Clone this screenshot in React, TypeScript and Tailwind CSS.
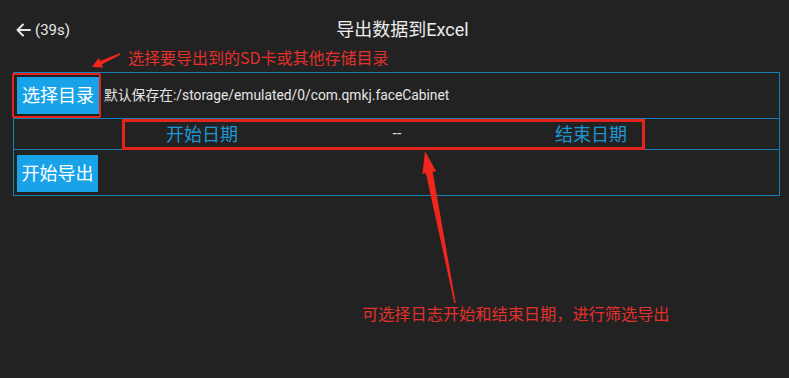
import React from "react";

const font = { fontFamily: '"Roboto", "Noto Sans CJK SC", sans-serif' } as const;

export default function App() {
  return (
    <div
      className="relative w-[789px] h-[378px] overflow-hidden bg-[#222222] text-[#e6e6e6]"
      style={font}
    >
      {/* header */}
      <div className="grid grid-cols-[1fr_auto_1fr] items-center h-[60px] pl-[16px]">
        <div className="flex items-center gap-[4px] text-[#e6e6e6]">
          <svg width="15" height="14" viewBox="0 0 15 14" fill="none" stroke="#e6e6e6" strokeWidth="2" strokeLinecap="round" strokeLinejoin="round">
            <path d="M14 7H2M7 1.5L1.5 7 7 12.5" />
          </svg>
          <span className="text-[15px] leading-none">(39s)</span>
        </div>
        <div className="text-[18px] leading-none text-[#ececec]">导出数据到Excel</div>
        <div />
      </div>

      {/* table */}
      <div className="mt-[12px] mx-[13px] w-[767px] border border-[#1b7fb6]">
        <div className="flex items-center h-[46px] pl-[3px] border-b border-[#1b7fb6]">
          <div className="flex items-center justify-center w-[82px] h-[37px] bg-[#18a3e8] text-white text-[18px]">
            选择目录
          </div>
          <span className="ml-[5px] text-[13.8px] text-[#e6e6e6]">
            默认保存在:/storage/emulated/0/com.qmkj.faceCabinet
          </span>
        </div>
        <div className="flex items-center h-[31px] border-b border-[#1b7fb6]">
          <span className="ml-[138px] w-[100px] text-center text-[18px] text-[#1b97d4]">开始日期</span>
          <span className="ml-[95px] w-[100px] text-center text-[16px] text-[#dcdcdc]">--</span>
          <span className="ml-[94px] w-[100px] text-center text-[18px] text-[#1b97d4]">结束日期</span>
        </div>
        <div className="flex items-start h-[45px] pl-[3px] pt-[5px]">
          <div className="flex items-center justify-center w-[81px] h-[37px] bg-[#18a3e8] text-white text-[18px]">
            开始导出
          </div>
        </div>
      </div>

      {/* annotations */}
      <div className="absolute left-[12px] top-[73px] w-[89px] h-[45px] border-2 border-[#e3231c] rounded-[2px] pointer-events-none" />
      <div className="absolute left-[122px] top-[119px] w-[523px] h-[31px] border-[3px] border-[#e3231c] pointer-events-none" />
      <div
        className="absolute left-[128px] top-[47px] text-[16px] leading-[20px] text-[#e3302a] whitespace-nowrap"
        style={{ fontFamily: '"Noto Sans CJK SC", sans-serif' }}
      >
        选择要导出到的SD卡或其他存储目录
      </div>
      <div
        className="absolute left-[362px] top-[303px] text-[16.2px] leading-[20px] text-[#e3302a] whitespace-nowrap"
        style={{ fontFamily: '"Noto Sans CJK SC", sans-serif' }}
      >
        可选择日志开始和结束日期，进行筛选导出
      </div>
      <svg className="absolute inset-0 pointer-events-none" width="789" height="378" viewBox="0 0 789 378">
        <polygon
          fill="#f0261e"
          points="92,67 103.3,67.6 101.8,64.6 120.4,54.8 119.6,53.2 100.2,61 98.7,57.9"
        />
        <polygon
          fill="#f0261e"
          points="425,151 436.2,171.2 432.7,171.9 455.7,302.9 454.3,303.1 425.9,173.3 422.4,174"
        />
      </svg>
    </div>
  );
}
